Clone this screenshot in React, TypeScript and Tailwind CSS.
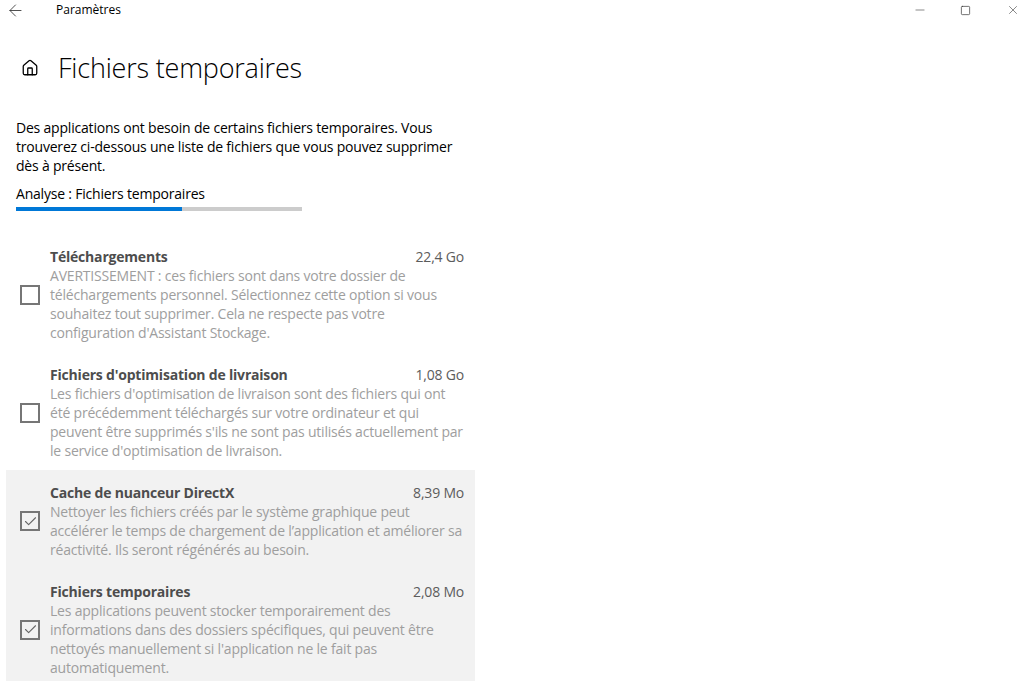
import { ArrowLeft, Minus, Square, X, Home, Check } from "lucide-react";

type Item = {
  title: string;
  size: string;
  desc: string;
  checked: boolean;
};

const items: Item[] = [
  {
    title: "Téléchargements",
    size: "22,4 Go",
    desc: "AVERTISSEMENT : ces fichiers sont dans votre dossier de téléchargements personnel. Sélectionnez cette option si vous souhaitez tout supprimer. Cela ne respecte pas votre configuration d'Assistant Stockage.",
    checked: false,
  },
  {
    title: "Fichiers d'optimisation de livraison",
    size: "1,08 Go",
    desc: "Les fichiers d'optimisation de livraison sont des fichiers qui ont été précédemment téléchargés sur votre ordinateur et qui peuvent être supprimés s'ils ne sont pas utilisés actuellement par le service d'optimisation de livraison.",
    checked: false,
  },
  {
    title: "Cache de nuanceur DirectX",
    size: "8,39 Mo",
    desc: "Nettoyer les fichiers créés par le système graphique peut accélérer le temps de chargement de l’application et améliorer sa réactivité. Ils seront régénérés au besoin.",
    checked: true,
  },
  {
    title: "Fichiers temporaires",
    size: "2,08 Mo",
    desc: "Les applications peuvent stocker temporairement des informations dans des dossiers spécifiques, qui peuvent être nettoyés manuellement si l'application ne le fait pas automatiquement.",
    checked: true,
  },
];

function FileRow({ item }: { item: Item }) {
  return (
    <div
      className={`flex items-center pl-[14px] pr-[11px] pt-[13px] pb-[10px] ${
        item.checked ? "bg-[#f2f2f2]" : ""
      }`}
    >
      <div className="w-[20px] h-[20px] border-2 border-[#767676] flex items-center justify-center shrink-0">
        {item.checked && <Check className="w-[15px] h-[15px] text-[#666]" strokeWidth={1.7} />}
      </div>
      <div className="ml-[10px] flex-1 text-[14px] leading-[19px] tracking-[-0.2px]">
        <div className="flex justify-between">
          <span className="font-bold text-[#4d4d4d]">{item.title}</span>
          <span className="text-[#5c5c5c]">{item.size}</span>
        </div>
        <p className="text-[#9e9e9e]">{item.desc}</p>
      </div>
    </div>
  );
}

export default function App() {
  return (
    <div
      className="w-[1024px] h-[681px] bg-white overflow-hidden text-black"
      style={{ fontFamily: '"Segoe UI", "Open Sans", "Noto Sans", sans-serif' }}
    >
      {/* Title bar */}
      <div className="flex items-center h-[18px] pt-[2px]">
        <ArrowLeft className="ml-[6px] w-[19px] h-[19px] text-[#222]" strokeWidth={1} />
        <span className="ml-[31px] text-[12px]">Paramètres</span>
        <div className="ml-auto flex items-center">
          <Minus className="w-[14px] h-[14px] text-[#333] mr-[33px]" strokeWidth={1} />
          <Square className="w-[11px] h-[11px] text-[#333] mr-[35px]" strokeWidth={1.5} />
          <X className="w-[14px] h-[14px] text-[#333] mr-[4px]" strokeWidth={1} />
        </div>
      </div>

      {/* Header */}
      <div className="flex items-center mt-[30px] pl-[21px] h-[40px]">
        <Home className="w-[18px] h-[18px]" strokeWidth={1.7} />
        <h1 className="ml-[19px] text-[27px] font-light tracking-[-0.2px]">Fichiers temporaires</h1>
      </div>

      <div className="pl-[16px] mt-[30px] text-[14px] leading-[19px] tracking-[-0.2px]">
        <p className="w-[445px]">
          Des applications ont besoin de certains fichiers temporaires. Vous trouverez ci-dessous une liste de
          fichiers que vous pouvez supprimer dès à présent.
        </p>
        <p className="mt-[9px]">Analyse : Fichiers temporaires</p>
        <div className="mt-[4px] w-[286px] h-[4px] bg-[#cccccc]">
          <div className="h-full bg-[#0078d7]" style={{ width: "58%" }} />
        </div>
      </div>

      <div className="ml-[6px] w-[469px] mt-[23px]">
        {items.map((it) => (
          <FileRow key={it.title} item={it} />
        ))}
      </div>
    </div>
  );
}
